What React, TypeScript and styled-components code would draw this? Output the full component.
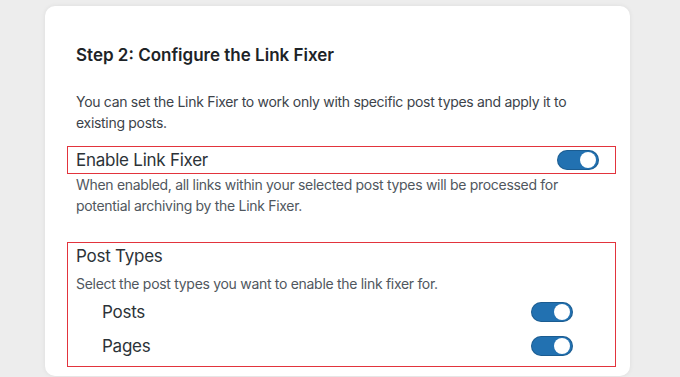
import React from 'react';
import styled, { createGlobalStyle } from 'styled-components';

const Global = createGlobalStyle`
  html, body { margin: 0; padding: 0; background: #ededed; }
  body { font-family: Inter, "Noto Sans", sans-serif; -webkit-font-smoothing: antialiased; }
  * { box-sizing: border-box; }
`;

const Page = styled.div`
  width: 680px;
  height: 377px;
  overflow: hidden;
  padding: 6px 0 0 45px;
`;

const Card = styled.section`
  width: 585px;
  height: 370px;
  background: #fff;
  border-radius: 10px;
  box-shadow: 0 0 5px rgba(0, 0, 0, 0.07);
  padding: 37px 14px 0 22px;
  display: flex;
  flex-direction: column;
`;

const Title = styled.h2`
  margin: 0 0 0 9px;
  font-size: 17px;
  font-weight: 600;
  line-height: 24px;
  color: #1d2327;
`;

const Intro = styled.p`
  margin: 24px 40px 0 9px;
  font-size: 14px;
  line-height: 21px;
  letter-spacing: -0.3px;
  color: #3c434a;
`;

const Outlined = styled.div<{ $pad: string; $mt: number }>`
  border: 1px solid #e2343d;
  padding: ${p => p.$pad};
  margin-top: ${p => p.$mt}px;
`;

const SettingRow = styled.div`
  display: flex;
  align-items: center;
  justify-content: space-between;
  height: 26px;
`;

const Label = styled.span`
  display: block;
  font-size: 17px;
  line-height: 26px;
  letter-spacing: -0.25px;
  color: #2c3338;
`;

const Help = styled.p<{ $mt: number }>`
  margin: ${p => p.$mt}px 40px 0 9px;
  font-size: 14px;
  line-height: 21px;
  letter-spacing: -0.3px;
  color: #50575e;
`;

const SubHelp = styled.p`
  margin: 4px 0 0 0;
  font-size: 14px;
  line-height: 21px;
  letter-spacing: -0.3px;
  color: #50575e;
`;

const TypeList = styled.div`
  display: flex;
  flex-direction: column;
  gap: 8px;
  margin-top: 5px;
  padding: 0 42px 0 26px;
`;

const Switch = styled.span`
  position: relative;
  display: inline-block;
  width: 42px;
  height: 20px;
  border-radius: 10px;
  background: #2271b1;
  box-shadow: inset 0 0 0 1px rgba(0, 0, 0, 0.18);
  flex-shrink: 0;
  &::after {
    content: '';
    position: absolute;
    top: 2px;
    right: 3px;
    width: 16px;
    height: 16px;
    border-radius: 50%;
    background: #fff;
  }
`;

export default function App() {
  return (
    <>
      <Global />
      <Page>
        <Card>
          <Title>Step 2: Configure the Link Fixer</Title>
          <Intro>
            You can set the Link Fixer to work only with specific post types and apply it to existing posts.
          </Intro>
          <Outlined $pad="0 16px 0 8px" $mt={13}>
            <SettingRow>
              <Label>Enable Link Fixer</Label>
              <Switch />
            </SettingRow>
          </Outlined>
          <Help $mt={0}>
            When enabled, all links within your selected post types will be processed for potential archiving by the Link Fixer.
          </Help>
          <Outlined $pad="0 0 7px 8px" $mt={26}>
            <Label>Post Types</Label>
            <SubHelp>Select the post types you want to enable the link fixer for.</SubHelp>
            <TypeList>
              <SettingRow>
                <Label>Posts</Label>
                <Switch />
              </SettingRow>
              <SettingRow>
                <Label>Pages</Label>
                <Switch />
              </SettingRow>
            </TypeList>
          </Outlined>
        </Card>
      </Page>
    </>
  );
}
